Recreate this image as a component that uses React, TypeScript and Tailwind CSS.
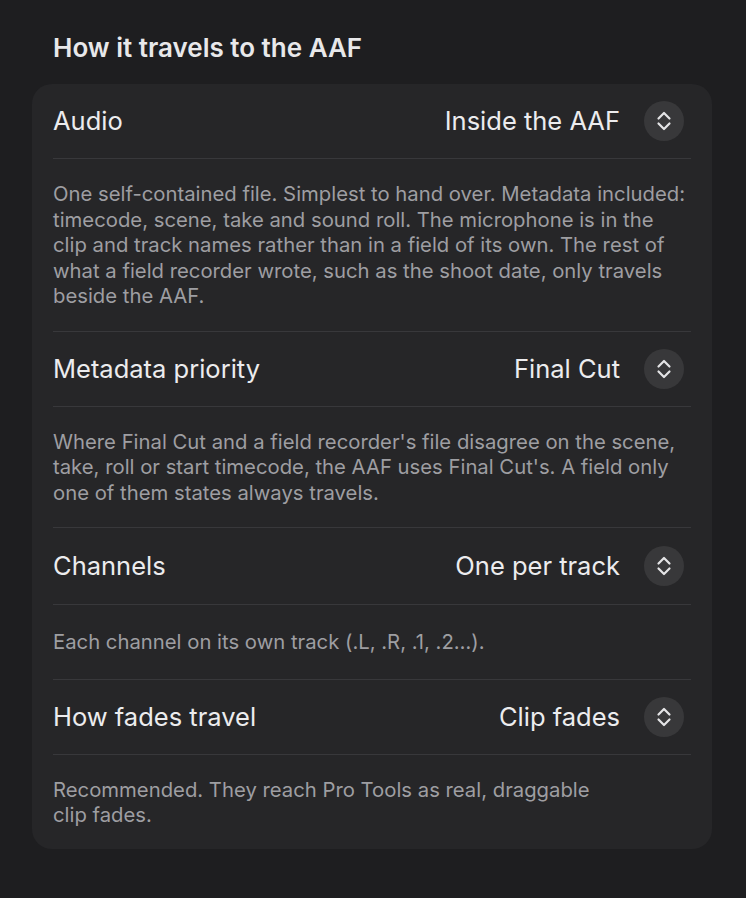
import React from "react";

const rows = [
  {
    label: "Audio",
    value: "Inside the AAF",
    desc: "One self-contained file. Simplest to hand over. Metadata included: timecode, scene, take and sound roll. The microphone is in the clip and track names rather than in a field of its own. The rest of what a field recorder wrote, such as the shoot date, only travels beside the AAF.",
    rowH: "h-[75px]",
    descPad: "py-[22px]",
  },
  {
    label: "Metadata priority",
    value: "Final Cut",
    desc: "Where Final Cut and a field recorder's file disagree on the scene, take, roll or start timecode, the AAF uses Final Cut's. A field only one of them states always travels.",
    rowH: "h-[75px]",
    descPad: "py-[22px]",
  },
  {
    label: "Channels",
    value: "One per track",
    desc: "Each channel on its own track (.L, .R, .1, .2…).",
    rowH: "h-[77px]",
    descPad: "py-[24px]",
  },
  {
    label: "How fades travel",
    value: "Clip fades",
    desc: "Recommended. They reach Pro Tools as real, draggable\nclip fades.",
    rowH: "h-[75px]",
    descPad: "pt-[22px] pb-[21px]",
  },
];

function Stepper() {
  return (
    <div className="flex h-[40px] w-[40px] items-center justify-center rounded-full bg-[#38383a]">
      <svg width="20" height="24" viewBox="0 0 20 24" fill="none" stroke="#e4e4e6" strokeWidth="2.2" strokeLinecap="round" strokeLinejoin="round">
        <path d="M4.5 9.5 L10 4 L15.5 9.5" />
        <path d="M4.5 14.5 L10 20 L15.5 14.5" />
      </svg>
    </div>
  );
}

export default function App() {
  return (
    <div className="min-h-[898px] w-full bg-[#1e1e20] pt-[31px] pl-[32px] pr-[34px]" style={{ fontFamily: "Inter, 'Noto Sans', sans-serif" }}>
      <h2 className="pl-[21px] text-[26px] font-semibold leading-[34px] text-[#e8e8ea]">How it travels to the AAF</h2>
      <div className="mt-[19px] rounded-[20px] bg-[#262628] px-[21px]">
        {rows.map((r, i) => (
          <div key={r.label} className={i > 0 ? "border-t border-[#38383b]" : ""}>
            <div className={`flex ${r.rowH} items-center justify-between border-b border-[#38383b] pr-[7px]`}>
              <span className="text-[25.5px] leading-[32px] text-[#ececee]">{r.label}</span>
              <div className="flex items-center gap-[24px]">
                <span className="text-[25.5px] leading-[32px] text-[#ececee]">{r.value}</span>
                <Stepper />
              </div>
            </div>
            <p className={`whitespace-pre-line ${r.descPad} text-[20.3px] leading-[25.5px] text-[#9e9ea2]`}>{r.desc}</p>
          </div>
        ))}
      </div>
    </div>
  );
}
